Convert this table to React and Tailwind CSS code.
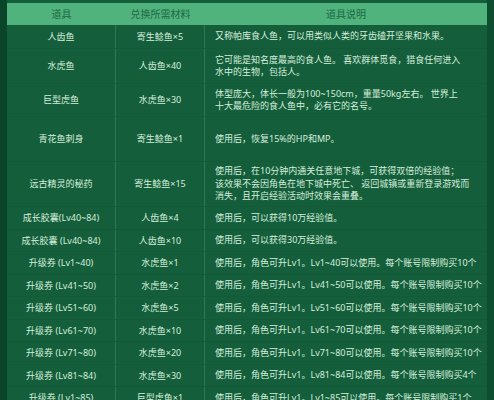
const rows = [
  { h: 'h-[24px]', name: '人齿鱼', cost: '寄生鲶鱼×5', desc: ['又称帕库食人鱼，可以用类似人类的牙齿磕开坚果和水果。'] },
  { h: 'h-[35px]', name: '水虎鱼', cost: '人齿鱼×40', desc: ['它可能是知名度最高的食人鱼。 喜欢群体觅食，猎食任何进入', '水中的生物，包括人。'] },
  { h: 'h-[33px]', name: '巨型虎鱼', cost: '水虎鱼×30', desc: ['体型庞大，体长一般为100~150cm，重量50kg左右。 世界上', '十大最危险的食人鱼中，必有它的名号。'] },
  { h: 'h-[45px]', name: '青花鱼刺身', cost: '寄生鲶鱼×1', desc: ['使用后，恢复15%的HP和MP。'] },
  { h: 'h-[45px]', name: '远古精灵的秘药', cost: '寄生鲶鱼×15', desc: ['使用后，在10分钟内通关任意地下城，可获得双倍的经验值；', '该效果不会因角色在地下城中死亡、 返回城镇或重新登录游戏而', '消失，且开启经验活动时效果会重叠。'] },
  { h: 'h-[23px]', name: '成长胶囊(Lv40~84)', cost: '人齿鱼×4', desc: ['使用后，可以获得10万经验值。'] },
  { h: 'h-[22px]', name: '成长胶囊 (Lv40~84)', cost: '人齿鱼×10', desc: ['使用后，可以获得30万经验值。'] },
  { h: 'h-[23px]', name: '升级券 (Lv1~40)', cost: '水虎鱼×1', desc: ['使用后，角色可升Lv1。Lv1~40可以使用。每个账号限制购买10个'] },
  { h: 'h-[22px]', name: '升级券 (Lv41~50)', cost: '水虎鱼×2', desc: ['使用后，角色可升Lv1。Lv41~50可以使用。每个账号限制购买10个'] },
  { h: 'h-[23px]', name: '升级券 (Lv51~60)', cost: '水虎鱼×5', desc: ['使用后，角色可升Lv1。Lv51~60可以使用。每个账号限制购买10个'] },
  { h: 'h-[22px]', name: '升级券 (Lv61~70)', cost: '水虎鱼×10', desc: ['使用后，角色可升Lv1。Lv61~70可以使用。每个账号限制购买10个'] },
  { h: 'h-[23px]', name: '升级券 (Lv71~80)', cost: '水虎鱼×20', desc: ['使用后，角色可升Lv1。Lv71~80可以使用。每个账号限制购买10个'] },
  { h: 'h-[22px]', name: '升级券 (Lv81~84)', cost: '水虎鱼×30', desc: ['使用后，角色可升Lv1。Lv81~84可以使用。每个账号限制购买4个'] },
  { h: 'h-[23px]', name: '升级券 (Lv1~85)', cost: '巨型虎鱼×1', desc: ['使用后，角色可升Lv1。Lv1~85可以使用。每个账号限制购买1个'] },
]

const font = { fontFamily: '"Noto Sans", "Noto Sans CJK SC", sans-serif' }

export default function App() {
  return (
    <div className="w-[494px] h-[400px] overflow-hidden flex bg-[#0e5233] text-[9px]" style={font}>
      {/* left dark strip */}
      <div className="w-[7px] shrink-0 bg-[#0b4529]" />

      <div className="w-[480px] shrink-0 flex flex-col pt-[3px] bg-[#145e3c]">
        {/* header */}
        <div className="flex h-[22px] shrink-0 bg-[#50b27d] text-[#1d6a43] text-[10px] leading-none">
          <div className="w-[109px] flex items-center justify-center">道具</div>
          <div className="w-[89px] flex items-center justify-center">兑换所需材料</div>
          <div className="flex-1 flex items-center justify-center">道具说明</div>
        </div>

        {rows.map((r, i) => (
          <div key={i} className={`flex shrink-0 ${r.h} text-[#d5eedb] border-b border-[#125a38]`}>
            <div className="w-[109px] flex items-center justify-center border-r border-[#2b7a52]">{r.name}</div>
            <div className="w-[89px] flex items-center justify-center border-r border-[#2b7a52]">{r.cost}</div>
            <div className="flex-1 flex flex-col justify-center pl-[10px] leading-[12.5px] whitespace-nowrap">
              {r.desc.map((d, j) => (
                <div key={j}>{d}</div>
              ))}
            </div>
          </div>
        ))}
      </div>

      {/* right dark strip */}
      <div className="flex-1 bg-[#0d4d30]" />
    </div>
  )
}
